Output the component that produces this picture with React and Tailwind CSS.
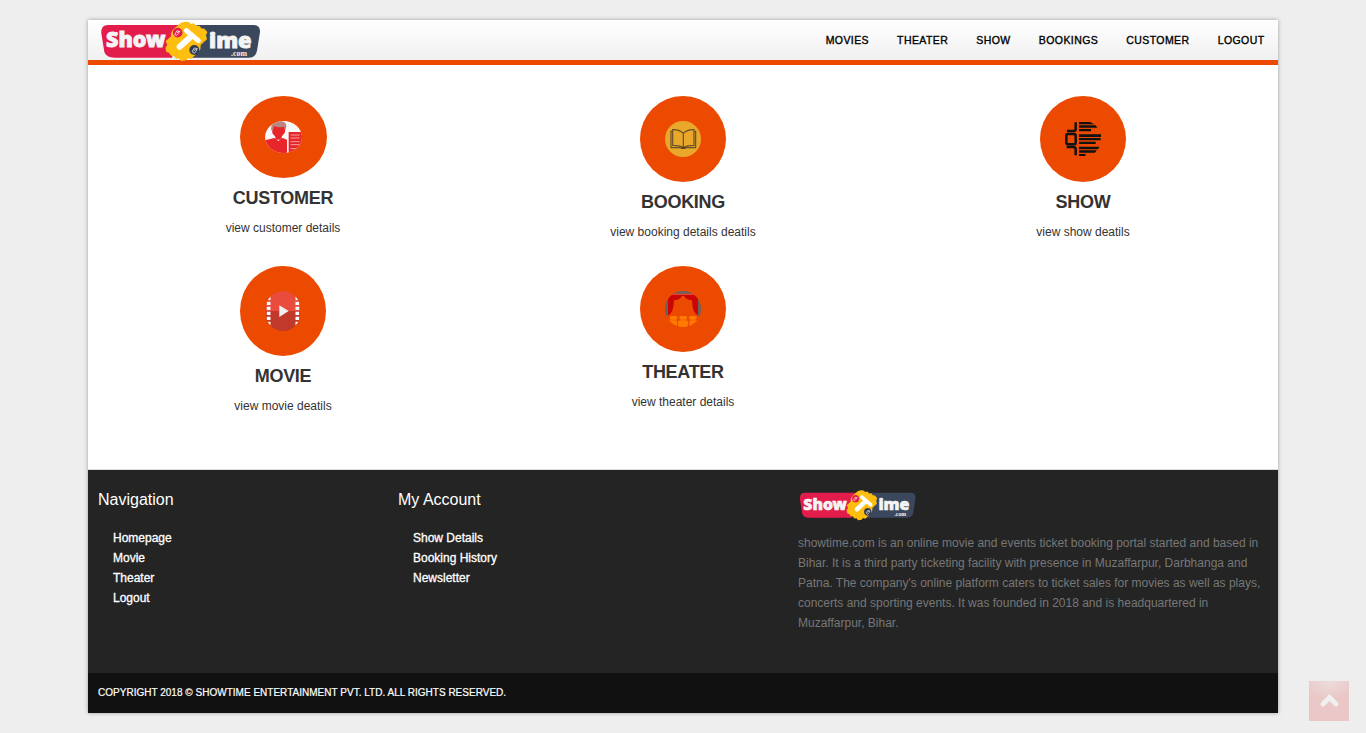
import React from "react";

function Logo({ className }) {
  return (
    <svg viewBox="60 30 486 126" preserveAspectRatio="none" className={className} role="img" aria-label="ShowTime.com">
      <path d="M84 45H304L276 143H104Q78 143 73 126L64 70Q62 45 84 45Z" fill="#e31d4b" />
      <path d="M350 45H521Q541 45 540 66L531 122Q527 143 506 143H322Z" fill="#3a475c" />
      <path
        d="M316 35L326 36L333 42L342 40L349 48L358 47L364 55L373 56L382 66L378 76L381 88L362 105Q364 116 356 126L333 147L324 144L318 151L303 153L297 145L288 146L282 138L273 137L267 128L259 126L256 114L262 104L257 94L273 79Q271 68 280 58L303 38Z"
        fill="#fdbe10"
      />
      <path d="M319 62L355 92" stroke="#fff" strokeWidth="15" strokeLinecap="round" />
      <path d="M335 78L299 110" stroke="#fff" strokeWidth="18" strokeLinecap="round" />
      <circle cx="293" cy="68" r="14.5" fill="#e31d4b" />
      <circle cx="343" cy="120" r="15" fill="#2e3b4e" />
      <g fill="none" stroke="#fff" strokeWidth="2.2">
        <path d="M284 74L291 62Q299 63 297 68L290 76ZM291 68L301 63" />
        <path d="M336 125L343 114Q353 114 350 121L343 130ZM341 122L353 115" />
      </g>
      <g fill="#f4f4f4" fontFamily="'Noto Sans', 'Open Sans', sans-serif" fontWeight="900">
        <text x="78" y="112" fontSize="65" textLength="179" lengthAdjust="spacingAndGlyphs" stroke="#f4f4f4" strokeWidth="2.5">Show</text>
        <text x="387" y="114" fontSize="62" textLength="128" lengthAdjust="spacingAndGlyphs" stroke="#f4f4f4" strokeWidth="2.5">ime</text>
        <text x="453" y="137" fontSize="22" fontFamily="'Liberation Serif', serif" fontWeight="700" textLength="48" lengthAdjust="spacingAndGlyphs">.com</text>
      </g>
    </svg>
  );
}

function CustomerIcon() {
  return (
    <svg viewBox="0 0 111 96" className="h-8 w-[37px]">
      <clipPath id="customer"><ellipse cx="55.5" cy="48" rx="55.5" ry="48" /></clipPath>
      <g clipPath="url(#customer)">
        <path d="M0 0H111V96H0Z" fill="#faf7f8" />
        <path d="M0 58L28 51L40 60L53 51L66 56V96H0Z" fill="#e8252b" />
        <path d="M21 12H61L60 34L50 47V56H31V47L22 37Z" fill="#e8252b" />
        <path d="M18 27L20 10Q24 0 42 0Q66 0 64 17L60 29L57 17Q40 21 27 15L23 29Z" fill="#bd8580" />
        <path d="M71 33H111V96H71Z" fill="#e8252b" />
        <path d="M77 42H104M77 51H104M77 62H104M77 71H104M77 83H104" stroke="#f6a2a2" strokeWidth="3" />
      </g>
    </svg>
  );
}

function BookingIcon() {
  return (
    <svg viewBox="0 0 108 108" className="size-9">
      <circle cx="54" cy="54" r="54" fill="#e9a829" />
      <g fill="none" stroke="#6b4f28" strokeWidth="3.5">
        <path d="M55 37Q43 25 23 26V73Q43 73 55 80Q67 73 87 73V26Q67 25 55 37V80" />
        <path d="M22 31H18V80H46Q55 85 64 80H92V31H88" />
      </g>
      <path d="M48 79H62L56 84Z" fill="#4c3b28" />
    </svg>
  );
}

function ShowIcon() {
  return (
    <svg viewBox="0 0 108 108" className="size-9">
      <g fill="none" stroke="#111" strokeWidth="7.5">
        <path d="M32 4V25Q32 30 25 30H6M5 78H25Q32 78 32 85V103" />
        <rect x="4" y="39" width="28" height="31" rx="5" />
      </g>
      <path d="M42 3H75L88 10H42ZM42 13H92L97 20H42ZM42 24H78V31H42ZM42 40H108V48H42ZM42 51H107V58H42ZM42 62H92V69H42ZM42 77H103L99 85H42ZM42 88H95L90 95H42ZM42 99H63L60 105H42Z" fill="#111" />
    </svg>
  );
}

function MovieIcon() {
  return (
    <svg viewBox="0 0 108 120" className="h-10 w-9">
      <clipPath id="movie"><ellipse cx="54" cy="60" rx="54" ry="60" /></clipPath>
      <g clipPath="url(#movie)">
        <path d="M3 0H105V60H3Z" fill="#e94b3d" />
        <path d="M3 60H105V120H3Z" fill="#c1392b" />
        <path d="M11 17V112M97 17V112" stroke="#fff" strokeWidth="11" strokeDasharray="10 5" />
      </g>
      <path d="M43 43L71 60L43 78Z" fill="#eef0f1" />
    </svg>
  );
}

function TheaterIcon() {
  return (
    <svg viewBox="0 0 108 108" className="size-9">
      <clipPath id="theater"><circle cx="54" cy="54" r="54" /></clipPath>
      <g clipPath="url(#theater)">
        <path d="M0 0H108V75H99V9H9V75H0Z" fill="#6b625b" />
        <path d="M9 8H99V12H9Z" fill="#e8412c" />
        <path d="M9 12H99V73Q82 67 81 28Q65 28 57 15H51Q43 28 27 28Q26 67 9 73Z" fill="#cb0505" />
        <g fill="#ff7b00">
          <rect x="14" y="75" width="23" height="11" rx="5" />
          <rect x="43" y="75" width="23" height="11" rx="5" />
          <rect x="72" y="75" width="23" height="11" rx="5" />
          <rect x="8" y="88" width="28" height="20" rx="4" />
          <rect x="39" y="88" width="30" height="20" rx="6" />
          <rect x="73" y="88" width="28" height="20" rx="4" />
        </g>
      </g>
    </svg>
  );
}

const tiles = [
  { title: "CUSTOMER", text: "view customer details", icon: <CustomerIcon />, size: "w-[87px] h-[82px]" },
  { title: "BOOKING", text: "view booking details deatils", icon: <BookingIcon />, size: "w-[86px] h-[86px]" },
  { title: "SHOW", text: "view show deatils", icon: <ShowIcon />, size: "w-[86px] h-[86px]" },
  { title: "MOVIE", text: "view movie deatils", icon: <MovieIcon />, size: "w-[86px] h-[90px]" },
  { title: "THEATER", text: "view theater details", icon: <TheaterIcon />, size: "w-[86px] h-[86px]" },
];

const menu = ["MOVIES", "THEATER", "SHOW", "BOOKINGS", "CUSTOMER", "LOGOUT"];

function LinkColumn({ title, links, className }) {
  return (
    <div className={className}>
      <h3 className="text-[16px] leading-5">{title}</h3>
      <ul className="mt-[18px] pl-[15px] [-webkit-text-stroke:0.3px_white]">
        {links.map((link) => (
          <li key={link}><a href="#">{link}</a></li>
        ))}
      </ul>
    </div>
  );
}

export default function App() {
  return (
    <div className="h-[733px] overflow-hidden bg-[#eeeeee] pt-5 font-['Liberation_Sans',Arial,sans-serif] text-[12px] leading-5 text-[#333333]">
      <div className="mx-auto flex h-[693px] w-[1190px] flex-col bg-white shadow-[0_0_4px_rgba(0,0,0,0.35)]">
        <header className="flex h-[45px] shrink-0 items-start justify-between border-b-[5px] border-[#ec4a00] bg-linear-to-b from-white to-[#f0f0f0] pr-[13.5px] pl-3">
          <Logo className="h-[42px] w-[162px] shrink-0" />
          <nav className="flex h-10 items-center gap-[28.1px] text-[10.5px] tracking-[0.42px] text-black [-webkit-text-stroke:0.35px_black]">
            {menu.map((item) => (
              <a key={item} href="#">{item}</a>
            ))}
          </nav>
        </header>

        <main className="grid h-[405px] shrink-0 auto-rows-[170px] grid-cols-3 gap-x-[10px] border-b border-[#dddddd] pt-[31px]">
          {tiles.map((tile) => (
            <section key={tile.title} className="flex flex-col items-center">
              <div className={`flex shrink-0 items-center justify-center rounded-[50%] bg-[#ec4a00] ${tile.size}`}>{tile.icon}</div>
              <h2 className="mt-[10px] text-[18px] leading-5 font-bold tracking-[-0.3px]">{tile.title}</h2>
              <p className="mt-[10px]">{tile.text}</p>
            </section>
          ))}
        </main>

        <footer className="flex h-[203px] shrink-0 bg-[#242424] pl-[10px] text-white">
          <LinkColumn className="w-[300px] pt-5" title="Navigation" links={["Homepage", "Movie", "Theater", "Logout"]} />
          <LinkColumn className="w-[400px] pt-5" title="My Account" links={["Show Details", "Booking History", "Newsletter"]} />
          <div className="w-[470px] pt-[19px]">
            <Logo className="ml-px h-8 w-[118px]" />
            <p className="mt-3 text-[#777777]">
              showtime.com is an online movie and events ticket booking portal started and based in Bihar. It is a third party ticketing facility with presence in Muzaffarpur, Darbhanga and Patna. The company's online platform caters to ticket sales for movies as well as plays, concerts and sporting events. It was founded in 2018 and is headquartered in Muzaffarpur, Bihar.
            </p>
          </div>
        </footer>
        <div className="flex h-10 shrink-0 items-center bg-[#111111] px-[10px] text-[10px] tracking-[0.015px] text-white [-webkit-text-stroke:0.2px_white]">
          COPYRIGHT 2018 © SHOWTIME ENTERTAINMENT PVT. LTD. ALL RIGHTS RESERVED.
        </div>
      </div>

      <a href="#" aria-label="Back to top" className="fixed right-[17px] bottom-3 flex size-10 items-center justify-center bg-[#eac8c8] bg-[radial-gradient(ellipse_26px_18px_at_50%_0,#ecdcdc,#eac8c8)]">
        <svg viewBox="0 0 40 40" className="size-10" fill="none" stroke="#f0f0f0" strokeWidth="5" strokeLinecap="round" strokeLinejoin="miter">
          <path d="M14 23L20.5 16.5L27 23" />
        </svg>
      </a>
    </div>
  );
}
